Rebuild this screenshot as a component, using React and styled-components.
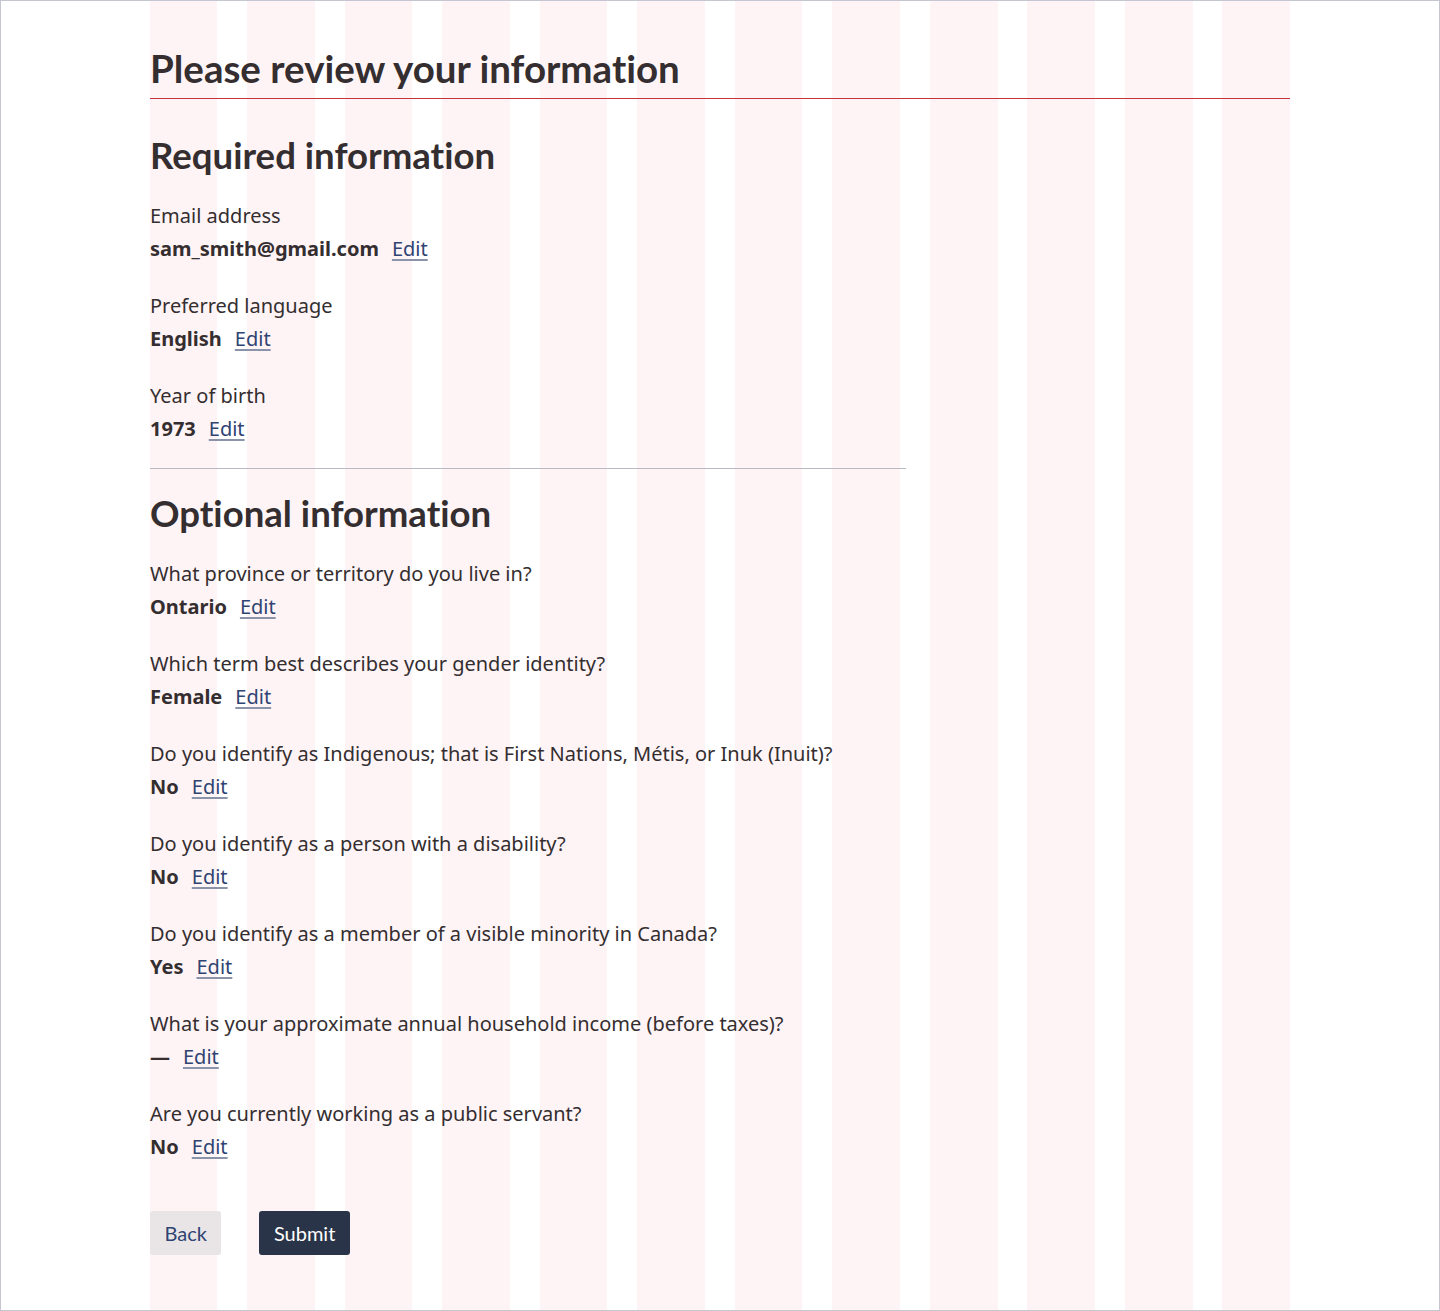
import React from 'react'
import styled, { createGlobalStyle } from 'styled-components'

const GlobalStyle = createGlobalStyle`
  html, body { margin: 0; padding: 0; background: #fff; }
  * { box-sizing: border-box; }
`

const required = [
  { label: 'Email address', value: 'sam_smith@gmail.com' },
  { label: 'Preferred language', value: 'English' },
  { label: 'Year of birth', value: '1973' },
]

const optional = [
  { label: 'What province or territory do you live in?', value: 'Ontario' },
  { label: 'Which term best describes your gender identity?', value: 'Female' },
  { label: 'Do you identify as Indigenous; that is First Nations, Métis, or Inuk (Inuit)?', value: 'No' },
  { label: 'Do you identify as a person with a disability?', value: 'No' },
  { label: 'Do you identify as a member of a visible minority in Canada?', value: 'Yes' },
  { label: 'What is your approximate annual household income (before taxes)?', value: '—' },
  { label: 'Are you currently working as a public servant?', value: 'No' },
]

const Field = ({ label, value }) => (
  <FieldBlock>
    <Label>{label}</Label>
    <ValueRow>
      <Value>{value}</Value>
      <EditLink href="#">Edit</EditLink>
    </ValueRow>
  </FieldBlock>
)

const App = () => {
  return (
    <Page>
      <GlobalStyle />
      <Container>
        <Title>Please review your information</Title>
        <Section>
          <SectionTitle>Required information</SectionTitle>
          <FieldList>
            {required.map((f) => <Field key={f.label} {...f} />)}
          </FieldList>
        </Section>
        <Divider />
        <Section>
          <SectionTitle>Optional information</SectionTitle>
          <FieldList>
            {optional.map((f) => <Field key={f.label} {...f} />)}
          </FieldList>
        </Section>
        <Buttons>
          <Button>Back</Button>
          <Button primary>Submit</Button>
        </Buttons>
      </Container>
    </Page>
  )
}

export default App

const Page = styled.div`
  min-height: 100vh;
  border: 1px solid #c4c6d2;
  background: #fff;
  font-family: "Noto Sans", sans-serif;
  color: #342e30;
`

const Container = styled.div`
  width: 1140px;
  margin: 0 auto;
  min-height: calc(100vh - 2px);
  padding: 41px 0 54px;
  background: repeating-linear-gradient(
    to right,
    #fff4f5 0,
    #fff4f5 67.5px,
    transparent 67.5px,
    transparent 97.5px
  );
`

const Title = styled.h1`
  margin: 0 0 32px;
  font-family: Lato, sans-serif;
  font-weight: 700;
  font-size: 38.5px;
  line-height: 52px;
  font-variant-ligatures: none;
  padding-bottom: 4px;
  border-bottom: 1px solid #c8323c;
  color: #342e30;
`

const Section = styled.section`
  width: 756px;
`

const SectionTitle = styled.h2`
  margin: 0 0 22px;
  font-family: Lato, sans-serif;
  font-weight: 700;
  font-size: 36.6px;
  line-height: 48px;
  font-variant-ligatures: none;
  color: #342e30;
`

const FieldList = styled.div`
  display: flex;
  flex-direction: column;
  gap: 27px;
`

const FieldBlock = styled.div`
  font-size: 20px;
  line-height: 30px;
`

const Label = styled.div`
  color: #342e30;
`

const ValueRow = styled.div`
  display: flex;
  gap: 13px;
  margin-top: 3px;
`

const Value = styled.span`
  font-weight: 700;
`

const EditLink = styled.a`
  color: #2f4472;
  text-decoration: underline;
  text-decoration-color: #8a93a9;
  text-underline-offset: 3px;
`

const Divider = styled.hr`
  width: 756px;
  margin: 24px 0 20px;
  border: 0;
  border-top: 1px solid #b9b9c2;
`

const Buttons = styled.div`
  display: flex;
  gap: 38px;
  margin-top: 49px;
`

const Button = styled.button`
  height: 44px;
  padding: 0 14.5px;
  border: none;
  border-radius: 3px;
  font-family: Lato, sans-serif;
  font-size: 20px;
  background: ${(p) => (p.primary ? '#2a3448' : '#e9e5e7')};
  color: ${(p) => (p.primary ? '#ffffff' : '#2f4472')};
  cursor: pointer;
`
